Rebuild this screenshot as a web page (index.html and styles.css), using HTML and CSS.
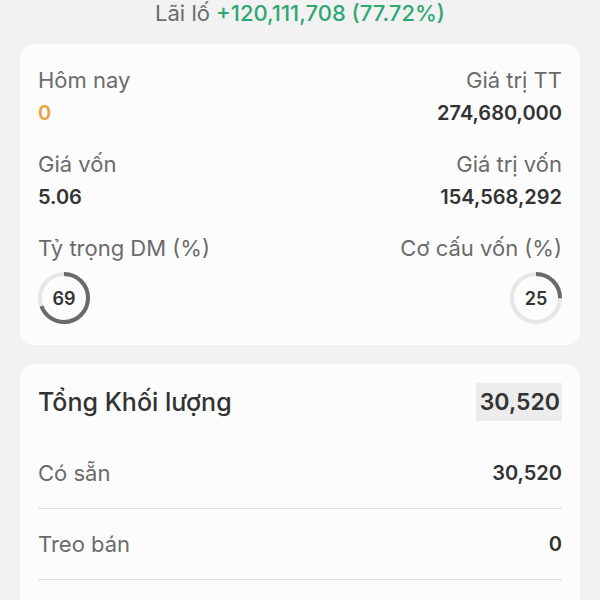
FILE: index.html
```html
<!DOCTYPE html>
<html lang="vi">
<head>
  <meta charset="UTF-8">
  <meta name="viewport" content="width=device-width, initial-scale=1.0">
  <title>Danh mục</title>
  <link rel="stylesheet" href="styles.css">
</head>
<body>
  <header class="pnl">
    Lãi lố <span class="pnl-value">+120,111,708 (77.72%)</span>
  </header>

  <main>
    <section class="card summary">
      <div class="row">
        <div class="cell">
          <div class="label">Hôm nay</div>
          <div class="value value-warn">0</div>
        </div>
        <div class="cell cell-right">
          <div class="label">Giá trị TT</div>
          <div class="value">274,680,000</div>
        </div>
      </div>
      <div class="row">
        <div class="cell">
          <div class="label">Giá vốn</div>
          <div class="value">5.06</div>
        </div>
        <div class="cell cell-right">
          <div class="label">Giá trị vốn</div>
          <div class="value">154,568,292</div>
        </div>
      </div>
      <div class="row">
        <div class="cell">
          <div class="label">Tỷ trọng DM (%)</div>
          <div class="ring">
            <svg viewBox="0 0 52 52" width="52" height="52">
              <circle class="ring-track" cx="26" cy="26" r="24"></circle>
              <circle class="ring-bar" cx="26" cy="26" r="24" style="stroke-dasharray: 104.05 150.8"></circle>
            </svg>
            <span class="ring-text">69</span>
          </div>
        </div>
        <div class="cell cell-right">
          <div class="label">Cơ cấu vốn (%)</div>
          <div class="ring">
            <svg viewBox="0 0 52 52" width="52" height="52">
              <circle class="ring-track" cx="26" cy="26" r="24"></circle>
              <circle class="ring-bar" cx="26" cy="26" r="24" style="stroke-dasharray: 37.7 150.8"></circle>
            </svg>
            <span class="ring-text">25</span>
          </div>
        </div>
      </div>
    </section>

    <section class="card volume">
      <div class="volume-head">
        <h2>Tổng Khối lượng</h2>
        <span class="volume-total">30,520</span>
      </div>
      <div class="volume-row">
        <span class="label">Có sẵn</span>
        <span class="value">30,520</span>
      </div>
      <div class="volume-row">
        <span class="label">Treo bán</span>
        <span class="value">0</span>
      </div>
    </section>
  </main>
</body>
</html>
```

FILE: styles.css
```css
body {
  margin: 0;
  font-family: Inter, "Noto Sans", sans-serif;
  background: #f2f2f2;
  color: #333;
  overflow: hidden;
}

.pnl {
  text-align: center;
  font-size: 22px;
  color: #6b6b6b;
  line-height: 28px;
  margin-top: -1px;
}

.pnl-value {
  color: #2ea872;
  font-weight: 500;
}

main {
  padding: 17px 20px 0 20px;
  display: flex;
  flex-direction: column;
  gap: 19px;
}

.card {
  background: #fcfcfc;
  border-radius: 14px;
  padding: 0 18px;
}

.summary {
  padding-top: 22px;
  padding-bottom: 21px;
}

.row {
  display: flex;
  justify-content: space-between;
  margin-bottom: 23px;
}

.row:last-child {
  margin-bottom: 0;
}

.cell {
  display: flex;
  flex-direction: column;
  gap: 5px;
}

.cell-right {
  align-items: flex-end;
}

.label {
  font-size: 22px;
  line-height: 28px;
  color: #6b6b6b;
}

.value {
  font-size: 20px;
  line-height: 28px;
  font-weight: 600;
  color: #333;
}

.value-warn {
  color: #e9a23b;
}

.ring {
  position: relative;
  width: 52px;
  height: 52px;
  margin-top: 5px;
}

.ring svg {
  display: block;
  transform: rotate(-90deg);
}

.ring-track {
  fill: none;
  stroke: #e6e6e6;
  stroke-width: 4;
}

.ring-bar {
  fill: none;
  stroke: #6a6a6a;
  stroke-width: 4;
}

.ring-text {
  position: absolute;
  inset: 0;
  display: flex;
  align-items: center;
  justify-content: center;
  font-size: 18px;
  font-weight: 600;
  color: #333;
}

.volume {
  padding-top: 19px;
  padding-bottom: 60px;
}

.volume-head {
  display: flex;
  justify-content: space-between;
  align-items: center;
  padding-bottom: 17px;
}

.volume-head h2 {
  margin: 0;
  font-size: 25px;
  font-weight: 500;
  color: #333;
}

.volume-total {
  background: #ececec;
  font-size: 23px;
  font-weight: 600;
  line-height: 38px;
  padding: 0 2px 0 4px;
  color: #333;
}

.volume-row {
  display: flex;
  justify-content: space-between;
  align-items: center;
  height: 70px;
  border-bottom: 1px solid #dcdcdc;
}

.volume-row .value {
  font-size: 20px;
}
```
